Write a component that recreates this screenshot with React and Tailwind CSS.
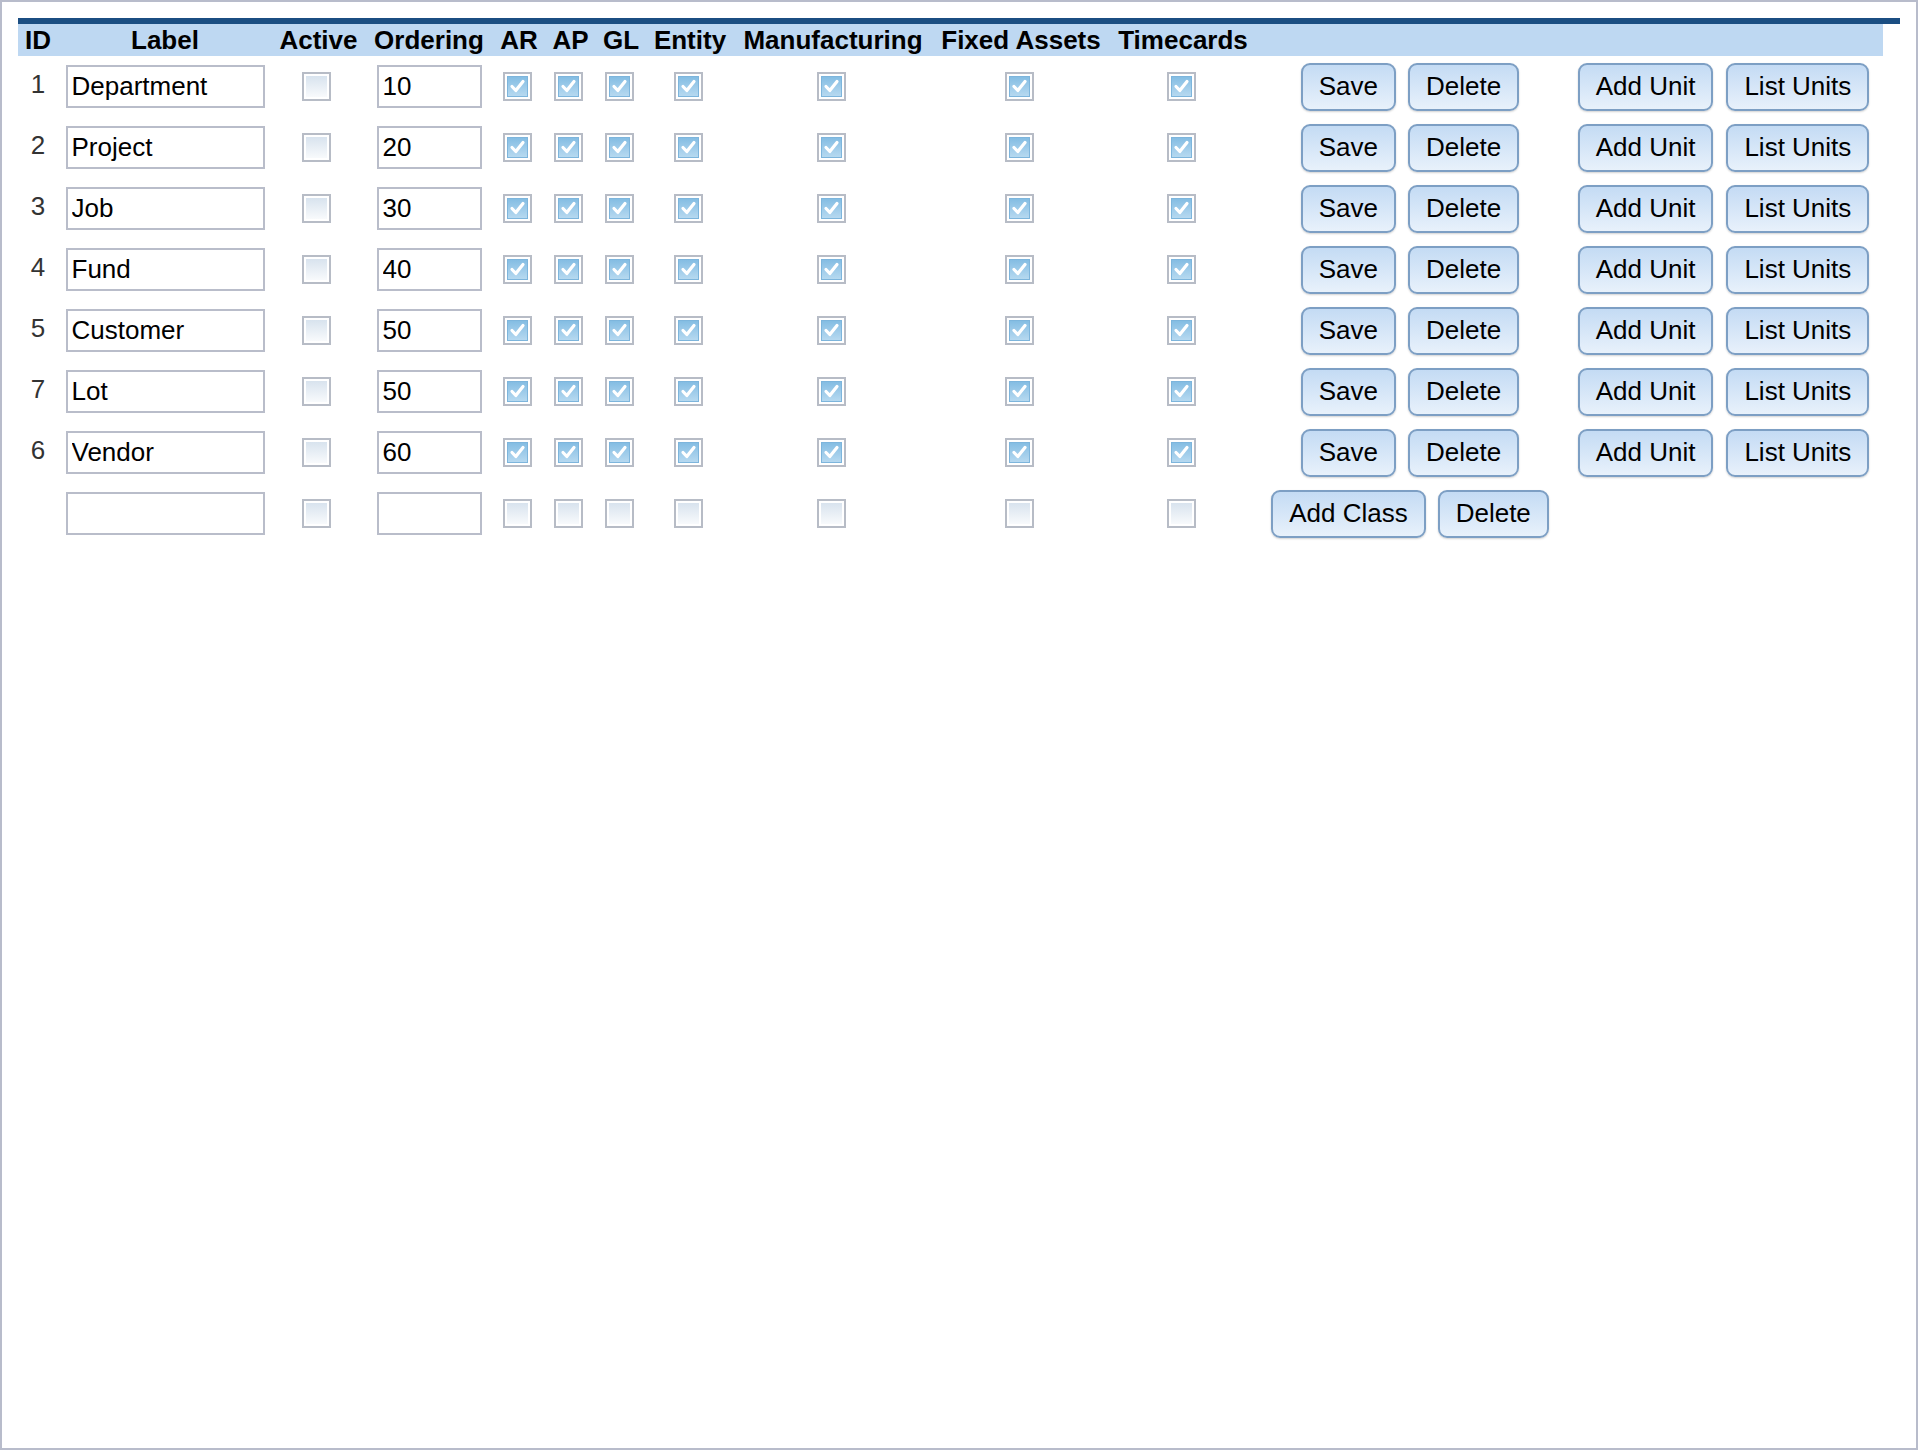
import React from 'react';

const classes = [
  { id: 1, label: 'Department', ordering: '10' },
  { id: 2, label: 'Project', ordering: '20' },
  { id: 3, label: 'Job', ordering: '30' },
  { id: 4, label: 'Fund', ordering: '40' },
  { id: 5, label: 'Customer', ordering: '50' },
  { id: 7, label: 'Lot', ordering: '50' },
  { id: 6, label: 'Vendor', ordering: '60' },
];

const headers = ['ID', 'Label', 'Active', 'Ordering', 'AR', 'AP', 'GL', 'Entity', 'Manufacturing', 'Fixed Assets', 'Timecards', '', ''];

const grid = 'grid grid-cols-[40px_214px_93px_128px_52px_51px_50px_88px_198px_178px_146px_308px_319px]';

const Check = ({ checked }) => (
  <div className="w-[29px] h-[29px] border-2 border-[#b7bcc6] bg-white p-[2px] mr-1">
    {checked ? (
      <div className="relative w-full h-full bg-linear-to-b from-[#84bde3] to-[#b6d9f0] border border-[#7db5dc]">
        <svg className="absolute inset-0" width="19" height="19" viewBox="0 0 19 19">
          <path d="M4 9.5 L7.8 13.5 L15 4.5" stroke="#fff" strokeWidth="3.2" fill="none" strokeLinecap="round" strokeLinejoin="round" />
        </svg>
      </div>
    ) : (
      <div className="w-full h-full bg-linear-to-b from-[#d8e3ee] to-[#f8fafc]" />
    )}
  </div>
);

const Btn = ({ children }) => (
  <button className="h-[48px] px-4 border-2 border-[#7d9fc4] rounded-[9px] bg-linear-to-b from-[#c4dbf4] to-[#e8f1fb] text-[26px] text-black shadow-[0_1px_2px_rgba(0,0,0,0.18)]">
    {children}
  </button>
);

const Cell = ({ children }) => (
  <div className="flex items-center justify-center">{children}</div>
);

const ClassRow = ({ row }) => {
  const isNew = !row;
  return (
    <div className={`${grid} h-[61px]`}>
      <Cell>
        <span className="text-[26px] text-[#333] mb-1">{row ? row.id : ''}</span>
      </Cell>
      <Cell>
        <input
          type="text"
          defaultValue={row ? row.label : ''}
          className="w-[199px] h-[43px] border-2 border-[#b9bdca] bg-white px-[4px] text-[26px] text-black outline-none"
        />
      </Cell>
      <Cell>
        <Check checked={false} />
      </Cell>
      <Cell>
        <input
          type="text"
          defaultValue={row ? row.ordering : ''}
          className="w-[105px] h-[43px] border-2 border-[#b9bdca] bg-white px-[4px] text-[26px] text-black outline-none"
        />
      </Cell>
      {[0, 1, 2, 3, 4, 5, 6].map((i) => (
        <Cell key={i}>
          <Check checked={!isNew} />
        </Cell>
      ))}
      <Cell>
        <div className="flex gap-3">
          {isNew ? <Btn>Add Class</Btn> : <Btn>Save</Btn>}
          <Btn>Delete</Btn>
        </div>
      </Cell>
      <Cell>
        {!isNew && (
          <div className="flex gap-[13px]">
            <Btn>Add Unit</Btn>
            <Btn>List Units</Btn>
          </div>
        )}
      </Cell>
    </div>
  );
};

export default function App() {
  return (
    <div className="w-full h-[1450px] border-2 border-[#b8bccb] bg-white p-4 font-['Liberation_Sans',Arial,sans-serif]">
      <div className="border-t-[6px] border-[#1b4e82]">
        <div className="w-[1865px]">
          <div className={`${grid} h-[32px] bg-[#bed8f2]`}>
            {headers.map((h, i) => (
              <div key={i} className="flex items-center justify-center text-[26px] leading-none font-bold text-black whitespace-nowrap">
                {h}
              </div>
            ))}
          </div>
          {classes.map((row) => (
            <ClassRow key={row.id} row={row} />
          ))}
          <ClassRow row={null} />
        </div>
      </div>
    </div>
  );
}
